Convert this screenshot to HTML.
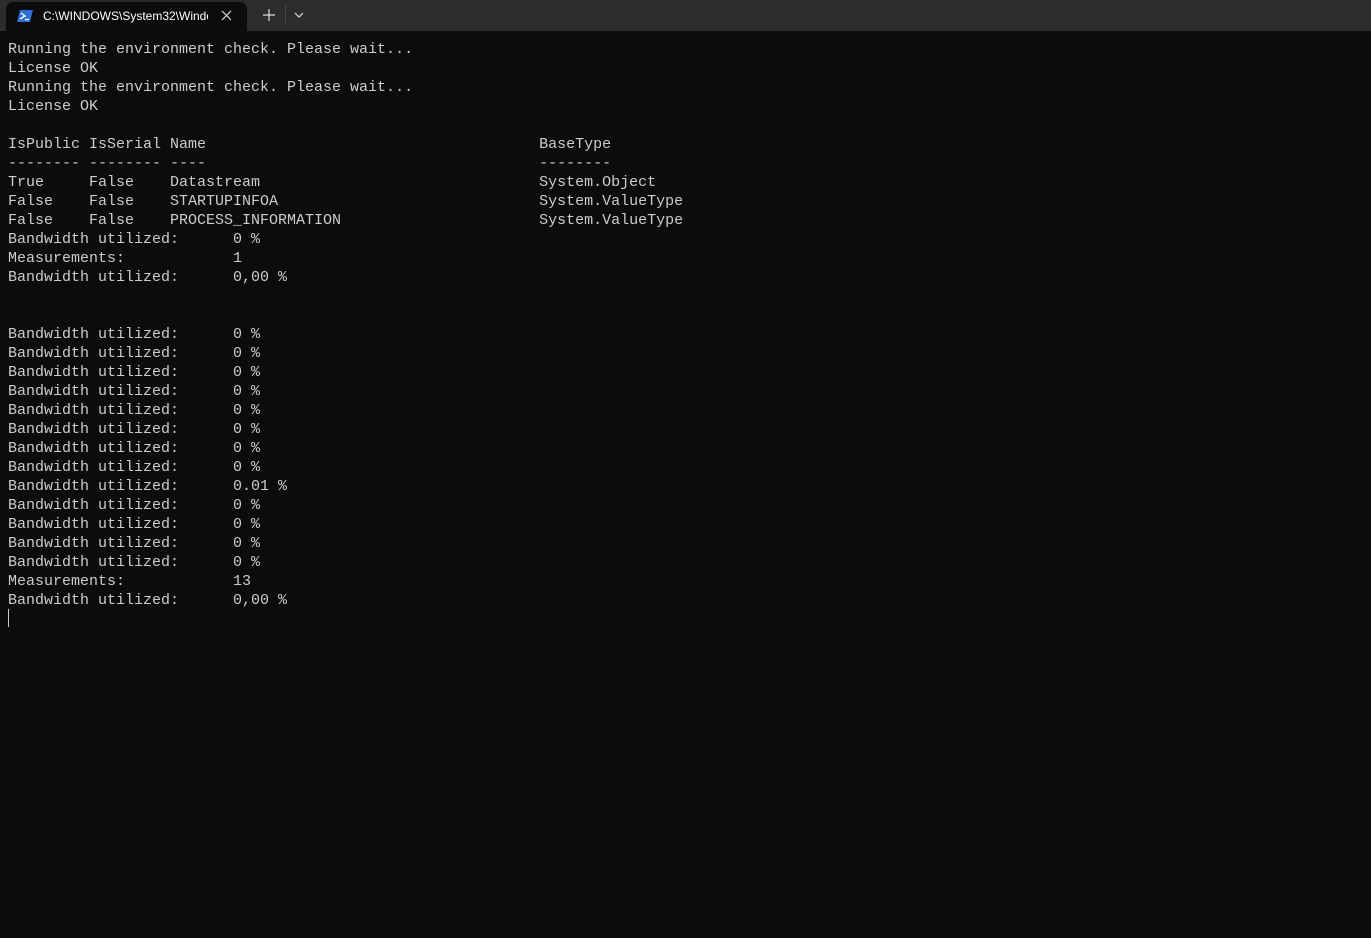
<!DOCTYPE html>
<html><head><meta charset="utf-8"><style>
html,body{margin:0;padding:0;width:1371px;height:938px;background:#0c0c0c;overflow:hidden}
#bar{position:absolute;left:0;top:0;width:1371px;height:31px;background:#2c2c2c}
#tab{position:absolute;left:6px;top:2px;width:241px;height:29px;background:#0c0c0c;border-radius:7px 7px 0 0}
#title{position:absolute;left:37px;top:7px;width:165px;overflow:hidden;white-space:nowrap;font:12px "Liberation Sans",sans-serif;color:#fff}
pre{position:absolute;left:8px;top:40px;margin:0;font:15px/19px "Liberation Mono",monospace;color:#cccccc}
#cur{position:absolute;left:8px;top:609px;width:1px;height:18px;background:#ccc}
</style></head><body>
<div id="bar">
<div id="tab">
<svg style="position:absolute;left:11px;top:7px" width="16" height="14" viewBox="0 0 16 14"><path d="M3 1h13l-3 12H0z" fill="#2f6fd6"/><path d="M4 4l4 3-5 3" stroke="#fff" stroke-width="1.4" fill="none"/><path d="M8 10.5h4" stroke="#fff" stroke-width="1.3"/></svg>
<div id="title">C:\WINDOWS\System32\WindowsPowerShell</div>
<svg style="position:absolute;left:215px;top:8px" width="11" height="11"><path d="M1 1l9 9M10 1l-9 9" stroke="#ddd" stroke-width="1.2"/></svg>
</div>
<svg style="position:absolute;left:263px;top:9px" width="12" height="12"><path d="M6 0v12M0 6h12" stroke="#ddd" stroke-width="1.2"/></svg>
<div style="position:absolute;left:285px;top:5px;width:1px;height:20px;background:#444"></div>
<svg style="position:absolute;left:294px;top:12px" width="10" height="6"><path d="M1 1l4 4 4-4" stroke="#ddd" stroke-width="1.2" fill="none"/></svg>
</div>
<pre>Running the environment check. Please wait...
License OK
Running the environment check. Please wait...
License OK

IsPublic IsSerial Name                                     BaseType
-------- -------- ----                                     --------
True     False    Datastream                               System.Object
False    False    STARTUPINFOA                             System.ValueType
False    False    PROCESS_INFORMATION                      System.ValueType
Bandwidth utilized:      0 %
Measurements:            1
Bandwidth utilized:      0,00 %


Bandwidth utilized:      0 %
Bandwidth utilized:      0 %
Bandwidth utilized:      0 %
Bandwidth utilized:      0 %
Bandwidth utilized:      0 %
Bandwidth utilized:      0 %
Bandwidth utilized:      0 %
Bandwidth utilized:      0 %
Bandwidth utilized:      0.01 %
Bandwidth utilized:      0 %
Bandwidth utilized:      0 %
Bandwidth utilized:      0 %
Bandwidth utilized:      0 %
Measurements:            13
Bandwidth utilized:      0,00 %</pre>
<div id="cur"></div>
</body></html>
